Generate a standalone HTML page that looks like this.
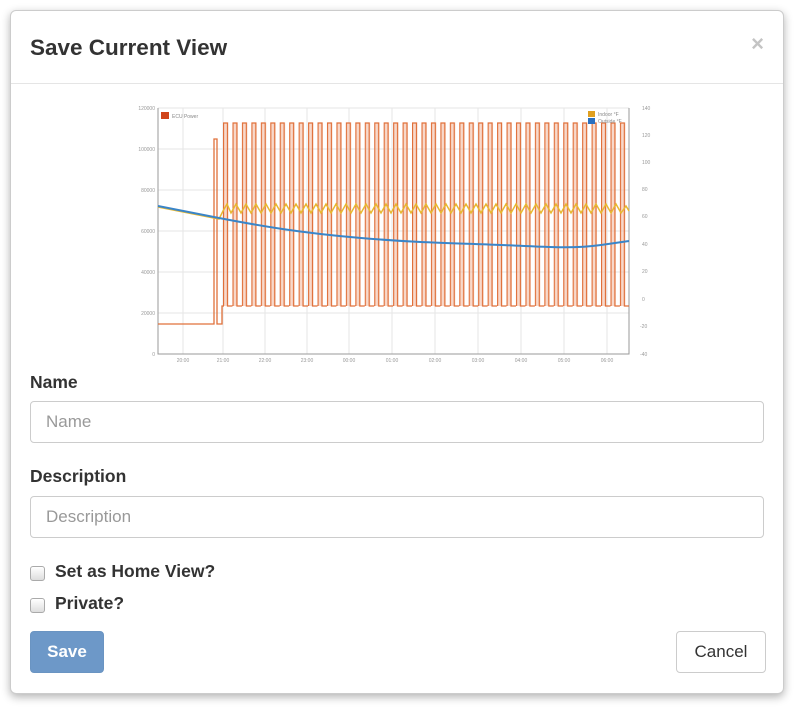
<!DOCTYPE html>
<html><head><meta charset="utf-8"><style>
body{margin:0;width:801px;height:707px;background:#fff;font-family:"Liberation Sans",sans-serif;position:relative;overflow:hidden}
.modal{position:absolute;left:10px;top:10px;width:772px;height:682px;background:#fff;border:1px solid #ccc;border-radius:6px;box-shadow:0 3px 9px rgba(0,0,0,.3)}
.hdr{height:72px;border-bottom:1px solid #e5e5e5;position:relative}
.hdr h4{margin:0;position:absolute;left:19px;top:24px;font-size:22.5px;font-weight:bold;color:#333}
.x{position:absolute;right:19px;top:20px;font-size:22px;font-weight:bold;color:#c4c4c4}
label.l{position:absolute;left:19px;font-weight:bold;font-size:17.5px;color:#333}
.inp{position:absolute;left:19px;width:734px;height:42px;border:1px solid #ccc;border-radius:4px;box-sizing:border-box;padding:0 15px;line-height:40px;color:#999;font-size:17px}
.cb{position:absolute;left:19px;width:13px;height:13px;border:1px solid #aaa;border-radius:3px;background:linear-gradient(#fff,#ddd)}
.cbl{position:absolute;left:44px;font-weight:bold;font-size:17.5px;color:#333}
.btn{position:absolute;top:620px;height:42px;border-radius:4px;box-sizing:border-box;font-size:17px;line-height:40px;text-align:center}
</style></head><body>
<div class="modal">
<div class="hdr"><h4>Save Current View</h4><span class="x">×</span></div>
<svg style="position:absolute;left:-10px;top:-10px" width="801" height="380">
<defs><pattern id="p" patternUnits="userSpaceOnUse" x="222" y="0" width="9.45" height="400">
<rect x="0" y="122" width="4.5" height="183" fill="#f3c0a8" opacity=".6"/>
<path d="M0.5 305V122H4.5V305H9.45" fill="none" stroke="#e0703a" stroke-width="1.3"/></pattern></defs>
<rect x="137" y="104" width="523" height="258" fill="#fff"/>
<g stroke="#e6e6e6" stroke-width="1">
<path d="M157 107H628M157 148H628M157 189H628M157 230H628M157 271H628M157 312H628"/>
<path d="M182 107V353M222 107V353M264 107V353M306 107V353M348 107V353M391 107V353M434 107V353M477 107V353M520 107V353M563 107V353M606 107V353"/>
</g>
<path d="M157 107V353H628V107" fill="none" stroke="#999"/>
<rect x="222" y="100" width="406" height="210" fill="url(#p)"/>
<path d="M157 323H213V138H216V323H221V305H223" fill="none" stroke="#e0703a" stroke-width="1.3"/>
<path d="M157 206L218 218 222 210 226 203 230 212 235 203 240 212 245 203 250 212 255 203 260 212 265 203 270 212 275 203 280 212 285 203 290 212 295 203 300 212 305 203 310 212 315 203 320 212 325 203 330 212 335 203 340 212 345 203 350 212 355 203 360 212 365 203 370 212 375 203 380 212 385 203 390 212 395 203 400 212 405 203 410 212 415 203 420 212 425 203 430 212 435 203 440 212 445 203 450 212 455 203 460 212 465 203 470 212 475 203 480 212 485 203 490 212 495 203 500 212 505 203 510 212 515 203 520 212 525 203 530 212 535 203 540 212 545 203 550 212 555 203 560 212 565 203 570 212 575 203 580 212 585 203 590 212 595 203 600 212 605 203 610 212 615 203 620 212 625 205 628 210" fill="none" stroke="#e8b830" stroke-width="1.5"/>
<path d="M157 205L218 217C260 225 300 232 360 237S450 242 500 244 570 248 600 244L628 240" fill="none" stroke="#3a85c8" stroke-width="2"/>
<rect x="160" y="111" width="8" height="7" fill="#d0441a"/><text x="171" y="117" font-size="5" fill="#888">ECU Power</text>
<rect x="587" y="110" width="7" height="6" fill="#e0a020"/><text x="597" y="115" font-size="5" fill="#888">Indoor °F</text>
<rect x="587" y="117" width="7" height="6" fill="#2a70c0"/><text x="597" y="122" font-size="5" fill="#888">Outside °F</text>
<g font-size="5" fill="#999" text-anchor="end"><text x="154" y="109">120000</text><text x="154" y="150">100000</text><text x="154" y="191">80000</text><text x="154" y="232">60000</text><text x="154" y="273">40000</text><text x="154" y="314">20000</text><text x="154" y="355">0</text></g>
<g font-size="5" fill="#999"><text x="641" y="109">140</text><text x="641" y="136">120</text><text x="641" y="163">100</text><text x="641" y="190">80</text><text x="641" y="217">60</text><text x="641" y="245">40</text><text x="641" y="272">20</text><text x="641" y="300">0</text><text x="639" y="327">-20</text><text x="639" y="355">-40</text></g>
<g font-size="5" fill="#999" text-anchor="middle"><text x="182" y="361">20:00</text><text x="222" y="361">21:00</text><text x="264" y="361">22:00</text><text x="306" y="361">23:00</text><text x="348" y="361">00:00</text><text x="391" y="361">01:00</text><text x="434" y="361">02:00</text><text x="477" y="361">03:00</text><text x="520" y="361">04:00</text><text x="563" y="361">05:00</text><text x="606" y="361">06:00</text></g>
</svg>
<label class="l" style="top:361px">Name</label>
<div class="inp" style="top:390px">Name</div>
<label class="l" style="top:455px">Description</label>
<div class="inp" style="top:485px">Description</div>
<div class="cb" style="top:555px"></div><span class="cbl" style="top:550px">Set as Home View?</span>
<div class="cb" style="top:587px"></div><span class="cbl" style="top:582px">Private?</span>
<div class="btn" style="left:19px;width:74px;background:#6d98c8;color:#fff;font-weight:bold;border:1px solid #6a94c2">Save</div>
<div class="btn" style="left:665px;width:90px;border:1px solid #ccc;color:#333">Cancel</div>
</div>
</body></html>
